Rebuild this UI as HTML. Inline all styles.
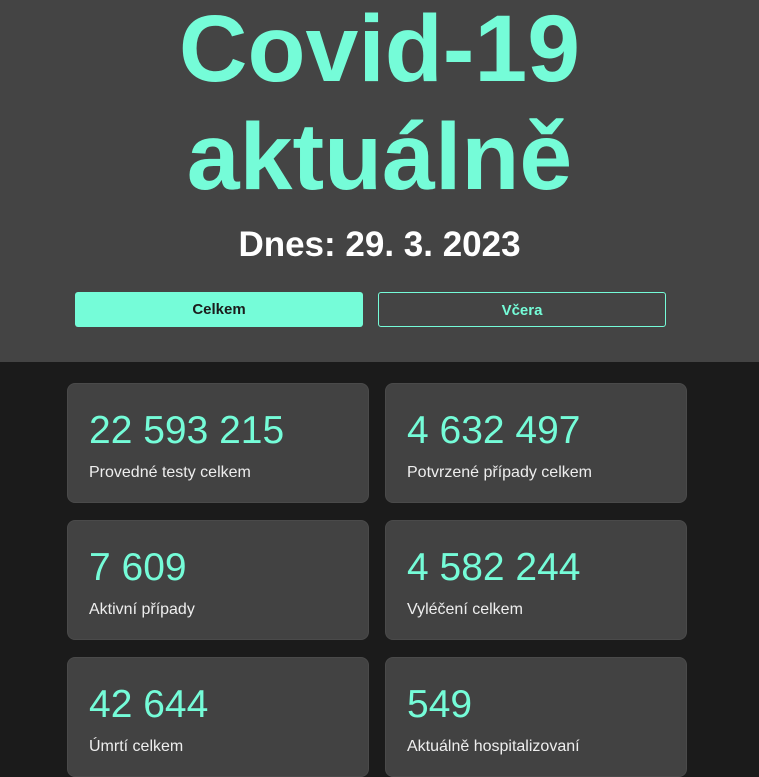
<!DOCTYPE html>
<html><head><meta charset="utf-8"><style>
body{margin:0;width:759px;height:759px;overflow:hidden;background:#1b1b1b;font-family:"Liberation Sans",sans-serif;}
.hdr{background:#444;height:362px;position:relative;}
h1{margin:0;position:absolute;left:0;right:0;text-align:center;color:#75fcd8;font-size:95px;font-weight:bold;line-height:110px;}
.date{position:absolute;top:225px;left:0;right:0;text-align:center;color:#fff;font-size:35px;font-weight:bold;}
.btn{position:absolute;top:292px;width:288px;height:35px;border-radius:3px;box-sizing:border-box;text-align:center;line-height:35px;font-weight:bold;font-size:15px;}
.c{position:absolute;width:302px;height:120px;background:#424242;border:1px solid #4a4a4a;border-radius:8px;box-sizing:border-box;}
.n{position:absolute;left:21px;top:25px;color:#75fcd8;font-size:39px;}
.l{position:absolute;left:21px;top:80px;color:#eee;font-size:16px;}
</style></head><body>
<div class="hdr">
<h1 style="top:-6px">Covid-19</h1>
<h1 style="top:102px">aktuálně</h1>
<div class="date">Dnes: 29. 3. 2023</div>
<div class="btn" style="left:75px;background:#75fcd8;color:#1b1b1b">Celkem</div>
<div class="btn" style="left:378px;border:1px solid #75fcd8;color:#75fcd8">Včera</div>
</div>
<div class="c" style="left:67px;top:383px"><div class="n">22 593 215</div><div class="l">Provedné testy celkem</div></div>
<div class="c" style="left:385px;top:383px"><div class="n">4 632 497</div><div class="l">Potvrzené případy celkem</div></div>
<div class="c" style="left:67px;top:520px"><div class="n">7 609</div><div class="l">Aktivní případy</div></div>
<div class="c" style="left:385px;top:520px"><div class="n">4 582 244</div><div class="l">Vyléčení celkem</div></div>
<div class="c" style="left:67px;top:657px"><div class="n">42 644</div><div class="l">Úmrtí celkem</div></div>
<div class="c" style="left:385px;top:657px"><div class="n">549</div><div class="l">Aktuálně hospitalizovaní</div></div>
</body></html>
